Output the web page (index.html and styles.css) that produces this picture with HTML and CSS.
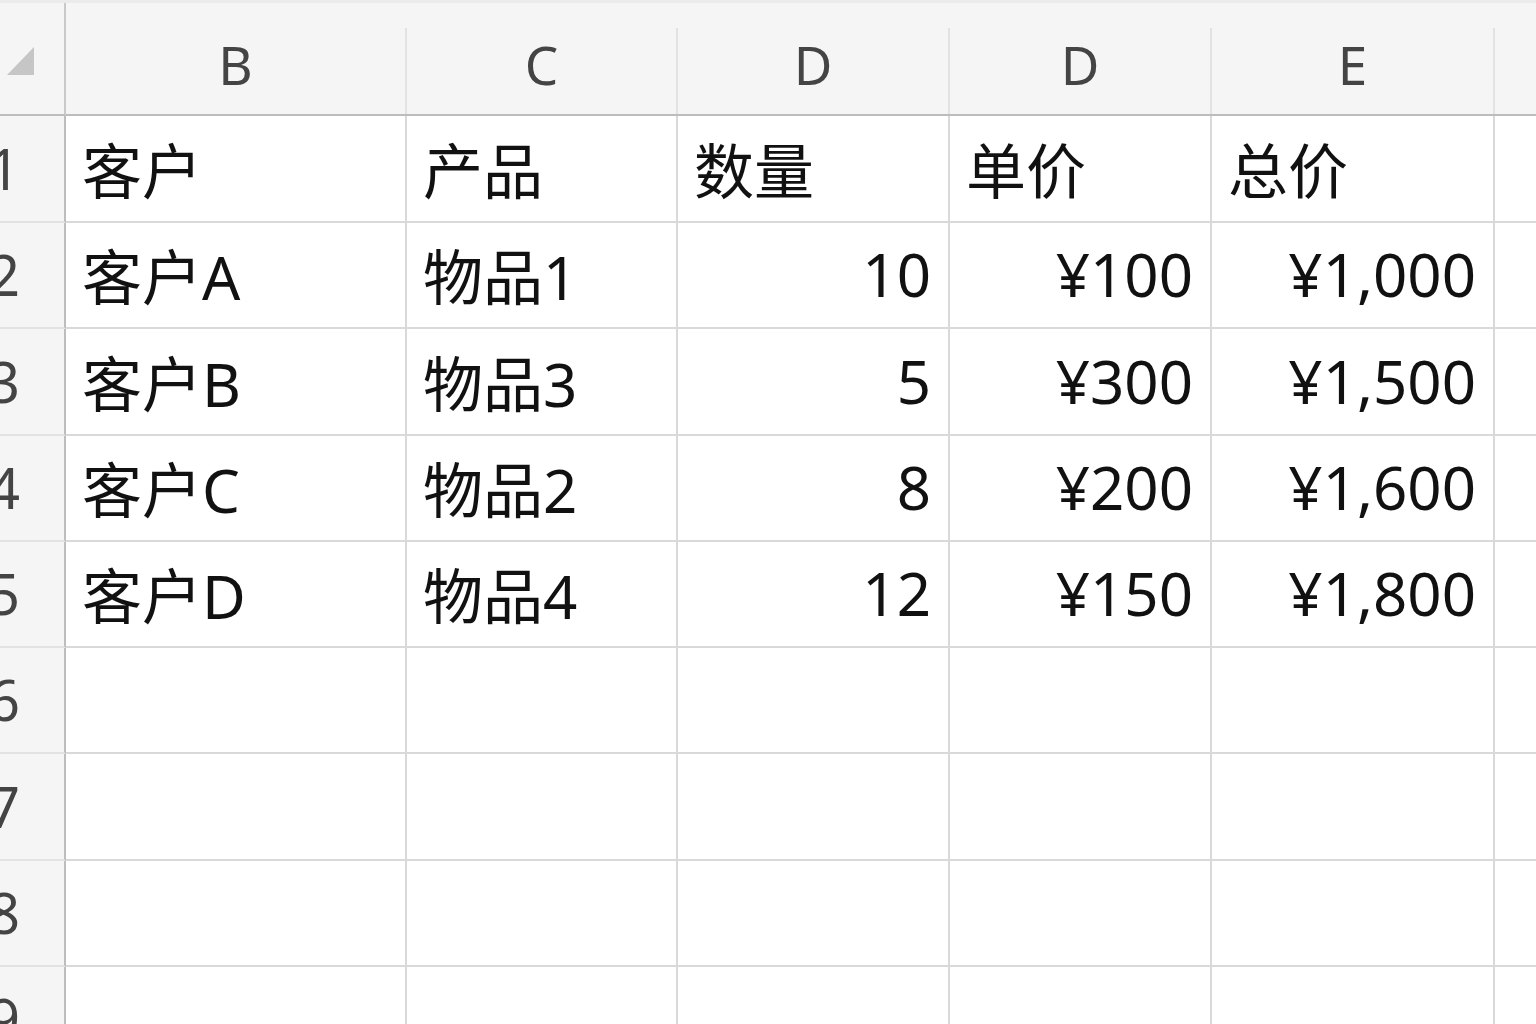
FILE: index.html
```html
<!DOCTYPE html>
<html lang="zh-CN">
<head>
<meta charset="utf-8">
<title>Sheet</title>
<link rel="stylesheet" href="styles.css">
</head>
<body>
<div class="sheet">
  <div class="corner"><div class="corner-inner"><span class="tri"></span></div></div>
  <div class="colhead"><div class="colhead-inner">B</div></div>
  <div class="colhead"><div class="colhead-inner">C</div></div>
  <div class="colhead"><div class="colhead-inner">D</div></div>
  <div class="colhead"><div class="colhead-inner">D</div></div>
  <div class="colhead"><div class="colhead-inner">E</div></div>
  <div class="colhead"><div class="colhead-inner"></div></div>

  <div class="rowhead">1</div>
  <div class="cell">客户</div><div class="cell">产品</div><div class="cell">数量</div><div class="cell">单价</div><div class="cell">总价</div><div class="cell"></div>

  <div class="rowhead">2</div>
  <div class="cell">客户A</div><div class="cell">物品1</div><div class="cell num">10</div><div class="cell num">¥100</div><div class="cell num">¥1,000</div><div class="cell"></div>

  <div class="rowhead">3</div>
  <div class="cell">客户B</div><div class="cell">物品3</div><div class="cell num">5</div><div class="cell num">¥300</div><div class="cell num">¥1,500</div><div class="cell"></div>

  <div class="rowhead">4</div>
  <div class="cell">客户C</div><div class="cell">物品2</div><div class="cell num">8</div><div class="cell num">¥200</div><div class="cell num">¥1,600</div><div class="cell"></div>

  <div class="rowhead">5</div>
  <div class="cell">客户D</div><div class="cell">物品4</div><div class="cell num">12</div><div class="cell num">¥150</div><div class="cell num">¥1,800</div><div class="cell"></div>

  <div class="rowhead">6</div>
  <div class="cell"></div><div class="cell"></div><div class="cell"></div><div class="cell"></div><div class="cell"></div><div class="cell"></div>

  <div class="rowhead">7</div>
  <div class="cell"></div><div class="cell"></div><div class="cell"></div><div class="cell"></div><div class="cell"></div><div class="cell"></div>

  <div class="rowhead">8</div>
  <div class="cell"></div><div class="cell"></div><div class="cell"></div><div class="cell"></div><div class="cell"></div><div class="cell"></div>

  <div class="rowhead">9</div>
  <div class="cell"></div><div class="cell"></div><div class="cell"></div><div class="cell"></div><div class="cell"></div><div class="cell"></div>
</div>
</body>
</html>
```

FILE: styles.css
```css
* { box-sizing: border-box; }
html, body {
  margin: 0;
  padding: 0;
  width: 1536px;
  height: 1024px;
  overflow: hidden;
  background: #ffffff;
}
.sheet {
  display: grid;
  grid-template-columns: 66px 341px 271px 272px 262px 283px 60px;
  grid-template-rows: 113px 107px 106px 107px 106px 106px 106px 107px 106px 106px;
  width: 1600px;
  font-family: "Noto Sans", "Noto Sans CJK SC", sans-serif;
  border-top: 3px solid #ebebeb;
}
.corner {
  background: #f5f5f5;
  border-bottom: 2px solid #bdbdbd;
  border-right: 2px solid #c9c9c9;
  padding-top: 28px;
}
.corner-inner {
  height: 100%;
  display: flex;
  align-items: center;
}
.tri {
  display: block;
  width: 0;
  height: 0;
  margin-left: 7px;
  margin-top: -24px;
  border-left: 27px solid transparent;
  border-bottom: 28px solid #c6c6c6;
}
.colhead {
  background: #f5f5f5;
  border-bottom: 2px solid #bdbdbd;
  padding-top: 25px;
}
.colhead-inner {
  height: 100%;
  border-right: 2px solid #e2e2e2;
  display: flex;
  align-items: center;
  justify-content: center;
  font-family: "Noto Sans", sans-serif;
  font-size: 53px;
  color: #444444;
  padding-bottom: 14px;
}
.rowhead {
  background: #f5f5f5;
  border-right: 2px solid #bdbdbd;
  border-bottom: 2px solid #e2e2e2;
  display: flex;
  align-items: center;
  justify-content: flex-end;
  padding-right: 44px;
  font-family: "Noto Sans", sans-serif;
  font-size: 56px;
  color: #444444;
  padding-bottom: 2px;
}
.cell {
  border-right: 2px solid #d9d9d9;
  border-bottom: 2px solid #d9d9d9;
  display: flex;
  align-items: center;
  padding: 0 16px 2px 16px;
  font-size: 60px;
  color: #111111;
  white-space: nowrap;
  overflow: hidden;
}
.cell.num {
  justify-content: flex-end;
  padding-right: 17px;
}
```
